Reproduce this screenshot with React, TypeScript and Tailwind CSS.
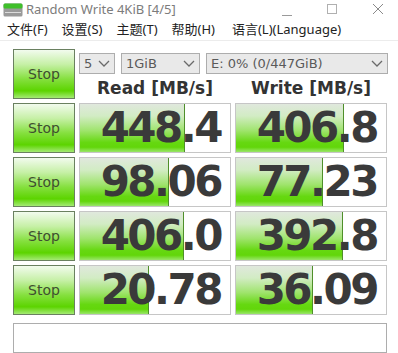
import React from "react"

const ROWS = [
  { read: "448.4", write: "406.8", rf: 105, wf: 108 },
  { read: "98.06", write: "77.23", rf: 89, wf: 87 },
  { read: "406.0", write: "392.8", rf: 104, wf: 107 },
  { read: "20.78", write: "36.09", rf: 69, wf: 77 },
]

const stopBtn =
  "w-[62px] h-[50px] shrink-0 border border-[#6a8060] flex items-center justify-center text-[14px] text-[#3f4f30] bg-[linear-gradient(to_bottom,#f2fbee_0%,#c6f0a6_30%,#86e040_60%,#5cd400_85%,#a4ea74_100%)]"

const mono = { fontFamily: "'DejaVu Sans', Verdana, sans-serif" }

function Chevron() {
  return (
    <svg width="12" height="8" viewBox="0 0 12 8" className="shrink-0">
      <polyline points="1,1 6,6 11,1" fill="none" stroke="#6a6a6a" strokeWidth="1.3" />
    </svg>
  )
}

function Select({ label, w }: { label: string; w: string }) {
  return (
    <div className={`${w} h-[21px] border border-[#adadad] bg-[#e9e9e9] flex items-center justify-between pl-[4px] pr-[4px] text-[#5a5a5a]`}>
      <span style={{ fontFamily: "'DejaVu Sans', sans-serif" }} className="text-[13px] leading-none">{label}</span>
      <Chevron />
    </div>
  )
}

function Cell({ value, fill, w }: { value: string; fill: number; w: string }) {
  return (
    <div className={`${w} h-[50px] border border-[#c6c6c6] bg-white relative overflow-hidden`}>
      <div
        className="absolute left-0 top-0 bottom-0 border-r border-[#4f8f2a] bg-[linear-gradient(to_bottom,#e0e8dd_0%,#d2ecc4_25%,#a0e46e_55%,#66d811_80%,#62d60a_90%,#9ae66a_100%)]"
        style={{ width: fill }}
      />
      <div
        className="relative h-full flex items-center justify-end pr-[9px] text-[42px] font-bold text-[#3a3a3a] tracking-[-2.5px] leading-none"
        style={mono}
      >
        {value}
      </div>
    </div>
  )
}

export default function App() {
  return (
    <div className="w-[398px] h-[353px] bg-white overflow-hidden" style={{ fontFamily: "'Noto Sans', 'Noto Sans CJK SC', sans-serif" }}>
      {/* title bar */}
      <div className="h-[20px] flex items-center relative">
        <svg width="20" height="14" viewBox="0 0 20 14" className="ml-[3px]">
          <rect x="0.5" y="0.5" width="19" height="13" rx="1.5" fill="#9a9a9a" />
          <rect x="0.5" y="0.5" width="19" height="5" rx="1.5" fill="#3fbf2a" />
          <rect x="2" y="9" width="16" height="1" fill="#dcdcdc" />
        </svg>
        <span className="ml-[3px] text-[13px] text-[#7c7c7c]">Random Write 4KiB [4/5]</span>
        <div className="absolute left-[282px] top-[15px] w-[10px] h-px bg-[#9a9a9a]" />
        <div className="absolute left-[327px] top-[4px] w-[10px] h-[10px] border border-[#b0b0b0]" />
        <svg width="12" height="12" viewBox="0 0 12 12" className="absolute left-[372px] top-[3px]">
          <path d="M1 1 L11 11 M11 1 L1 11" stroke="#8a8a8a" strokeWidth="1" />
        </svg>
      </div>

      {/* menu */}
      <div className="h-[21px] flex items-center pl-[7px] gap-[14px] text-[13px] text-[#222] border-b border-[#ececec]" style={{ fontFamily: "'Noto Sans', 'Noto Sans CJK SC', sans-serif" }}>
        <span>文件(F)</span>
        <span>设置(S)</span>
        <span>主题(T)</span>
        <span>帮助(H)</span>
        <span className="ml-[3px]">语言(L)(Language)</span>
      </div>

      <div className="pl-[13px] pt-[8px] flex flex-col gap-[4px]">
        {/* header row */}
        <div className="flex gap-[4px]">
          <div className={stopBtn} style={mono}>Stop</div>
          <div className="flex flex-col">
            <div className="flex gap-[6px] mt-[4px]">
              <Select label="5" w="w-[36px]" />
              <Select label="1GiB" w="w-[79px]" />
              <Select label="E: 0% (0/447GiB)" w="w-[182px]" />
            </div>
            <div className="flex gap-[4px] h-[25px] items-end pb-[1px] text-[17px] leading-[20px] font-bold text-[#333]" style={mono}>
              <div className="w-[152px] text-center">Read [MB/s]</div>
              <div className="w-[152px] text-center">Write [MB/s]</div>
            </div>
          </div>
        </div>

        {ROWS.map((r, i) => (
          <div key={i} className="flex gap-[4px]">
            <div className={stopBtn} style={mono}>Stop</div>
            <Cell value={r.read} fill={r.rf} w="w-[152px]" />
            <Cell value={r.write} fill={r.wf} w="w-[152px]" />
          </div>
        ))}

        <div className="mt-[4px] w-[374px] h-[30px] border border-[#adadad] bg-white" />
      </div>
    </div>
  )
}
